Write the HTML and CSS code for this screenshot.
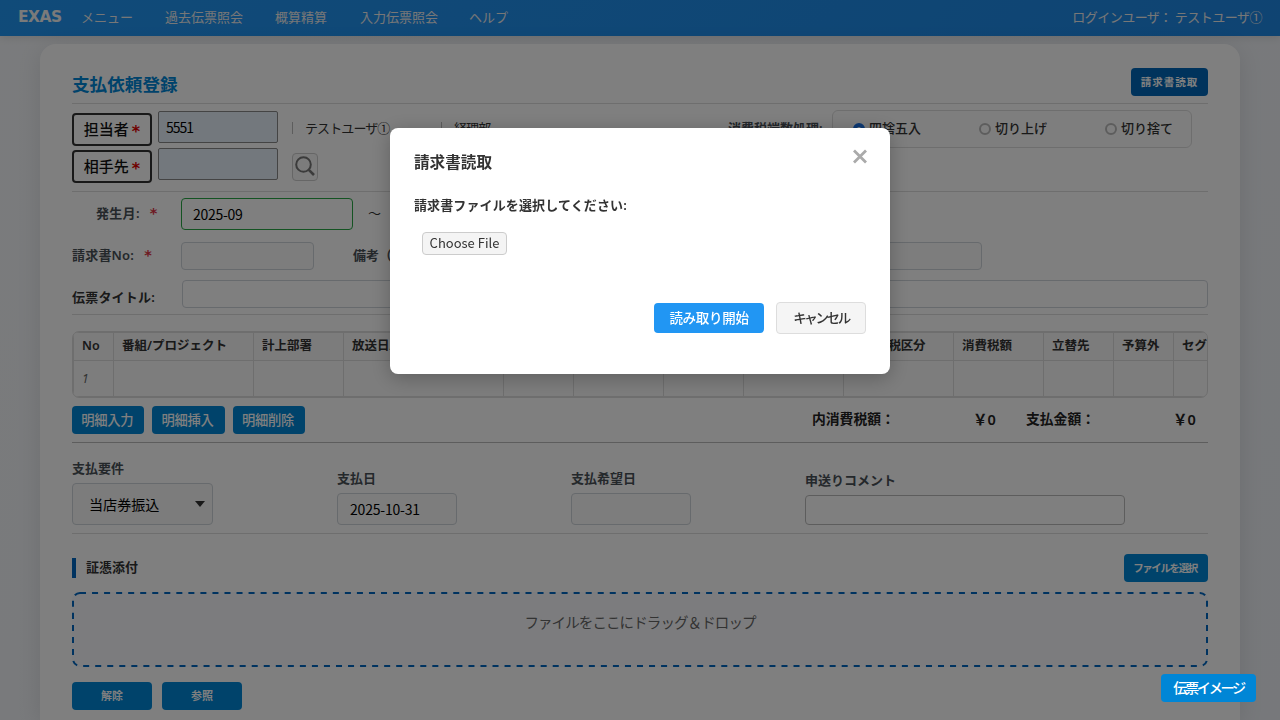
FILE: index.html
```html
<!DOCTYPE html>
<html lang="ja">
<head>
<meta charset="utf-8">
<title>支払依頼登録</title>
<link rel="stylesheet" href="styles.css">
</head>
<body>
<header class="navbar">
  <span class="brand">EXAS</span>
  <nav class="nav"><a class="n1">メニュー</a><a class="n2">過去伝票照会</a><a class="n3">概算精算</a><a class="n4">入力伝票照会</a><a>ヘルプ</a></nav>
  <span class="user">ログインユーザ： テストユーザ①</span>
</header>
<main class="card">
  <div class="title-row"><h1 class="title">支払依頼登録</h1><button class="btn btn-read">請求書読取</button></div>

  <section class="staff">
    <div class="staff-labels">
      <button class="label-btn">担当者<span class="req">*</span></button>
      <button class="label-btn">相手先<span class="req">*</span></button>
    </div>
    <div class="staff-inputs"><div class="input blue">5551</div><div class="input blue"></div></div>
    <div class="staff-info">
      <div class="info-line"><span class="user-name">テストユーザ①</span><span class="dept">経理部</span></div>
      <button class="search-btn"><svg width="22" height="22" viewBox="0 0 22 22"><circle cx="9.5" cy="9.5" r="7.3" fill="none" stroke="#777" stroke-width="2"/><path d="M14.8 14.8L20 20" stroke="#777" stroke-width="2.6"/></svg></button>
    </div>
    <div class="tax">
      <span class="tax-label">消費税端数処理:</span>
      <div class="radios">
        <label class="radio-item"><i class="radio checked"></i>四捨五入</label>
        <label class="radio-item"><i class="radio"></i>切り上げ</label>
        <label class="radio-item"><i class="radio"></i>切り捨て</label>
      </div>
    </div>
  </section>

  <section class="details">
    <div class="row row-month"><span class="lbl lbl-month">発生月:<b class="star">*</b></span><div class="input month">2025-09</div><span class="tilde">～</span></div>
    <div class="row row-no"><span class="lbl lbl-no">請求書No:<b class="star">*</b></span><div class="input invoice"></div><span class="lbl lbl-note">備考（支払）:</span><div class="input note"></div></div>
    <div class="row row-title"><span class="lbl lbl-title">伝票タイトル:</span><div class="input slip"></div></div>
  </section>

  <div class="table-wrap">
    <table class="grid">
      <colgroup><col class="w40"><col class="w140"><col class="w90"><col class="w160"><col class="w70"><col class="w90"><col class="w80"><col class="w100"><col class="w110"><col class="w90"><col class="w70"><col class="w60"><col class="w80"></colgroup>
      <tr><th>No</th><th>番組/プロジェクト</th><th>計上部署</th><th>放送日/対象月</th><th>科目</th><th>摘要</th><th>数量</th><th>金額</th><th class="th-tax">内消費税区分</th><th>消費税額</th><th>立替先</th><th>予算外</th><th>セグ</th></tr>
      <tr><td>1</td><td></td><td></td><td></td><td></td><td></td><td></td><td></td><td></td><td></td><td></td><td></td><td></td></tr>
    </table>
  </div>

  <div class="actions">
    <button class="btn btn-line">明細入力</button><button class="btn btn-line">明細挿入</button><button class="btn btn-line">明細削除</button>
    <div class="totals"><span class="t-tax">内消費税額：</span><span class="t-v1">￥0</span><span class="t-pay">支払金額：</span><span class="t-v2">￥0</span></div>
  </div>

  <section class="payment">
    <div class="field f1"><span class="flabel">支払要件</span><div class="input select">当店券振込<i class="caret"></i></div></div>
    <div class="field f2"><span class="flabel">支払日</span><div class="input date">2025-10-31</div></div>
    <div class="field f3"><span class="flabel">支払希望日</span><div class="input date"></div></div>
    <div class="field f4"><span class="flabel">申送りコメント</span><div class="input comment"></div></div>
  </section>

  <div class="attach-head"><h2 class="attach-title">証憑添付</h2><button class="btn btn-file">ファイルを選択</button></div>
  <div class="drop"><svg class="drop-line" width="1136" height="75"><rect x="1" y="1" width="1134" height="73" rx="7" fill="none" stroke="#0067c0" stroke-width="2" stroke-dasharray="6.02 6.02"/></svg>ファイルをここにドラッグ＆ドロップ</div>
  <div class="attach-actions"><button class="btn btn-small">解除</button><button class="btn btn-small">参照</button></div>
</main>

<div class="overlay">
  <div class="modal">
    <div class="modal-head"><h3 class="modal-title">請求書読取</h3><svg class="close" width="16" height="16" viewBox="0 0 16 16"><path d="M2 1.5L14 13.5M14 1.5L2 13.5" stroke="#aaa" stroke-width="2.8"/></svg></div>
    <p class="modal-text">請求書ファイルを選択してください:</p>
    <button class="choose">Choose File</button>
    <div class="modal-actions"><button class="btn start">読み取り開始</button><button class="btn cancel">キャンセル</button></div>
  </div>
</div>
<button class="btn floating">伝票イメージ</button>
</body>
</html>
```
FILE: styles.css
```css
* { box-sizing: border-box; }
html, body { height: 720px; overflow: hidden; }
body { margin: 0; background: linear-gradient(135deg, #f5f7fa 0%, #eef1f6 100%); font-family: "Noto Sans", "Noto Sans CJK JP", sans-serif; font-size: 13px; line-height: 20px; color: #333; }
h1, h2, h3, p { margin: 0; }
button { font-family: "Noto Sans CJK JP", sans-serif; padding: 0 0 2px; white-space: nowrap; }

.navbar { height: 36px; display: flex; align-items: center; padding: 0 18px 2px; background: linear-gradient(135deg, #2196f3, #1e88e5); box-shadow: 0 2px 8px rgba(0,0,0,.1); color: #fff; white-space: nowrap; }
.brand { width: 63px; font: bold 15.5px/20px "DejaVu Sans", sans-serif; letter-spacing: -.5px; color: #f5f5f5; }
.nav { display: flex; color: #eee; }
.n1 { width: 84px; }
.n2 { width: 110px; }
.n3 { width: 85px; }
.n4 { width: 109px; }
.user { margin-left: auto; color: #eee; letter-spacing: -.5px; }

.card { margin: 8px 40px 0; height: 676px; padding: 24px 32px 0; background: #fff; border-radius: 16px 16px 0 0; box-shadow: 0 4px 24px rgba(0,0,0,.1); }
.title-row { height: 36px; display: flex; justify-content: space-between; border-bottom: 1px solid #ddd; }
.title { font-size: 17.6px; line-height: 32px; color: #0086d6; }
.btn { height: 28px; border: 0; border-radius: 4px; background: #0086d6; color: #fff; font-weight: bold; }
.btn-read { width: 77px; background: #0067b8; font-size: 10.5px; letter-spacing: 1px; }

.staff { height: 88px; display: flex; border-bottom: 1px solid #ddd; }
.staff-labels { display: flex; flex-direction: column; gap: 4px; padding-top: 9px; width: 86px; }
.label-btn { width: 80px; height: 33px; border: 2px solid #333; border-radius: 4px; background: #fff; font-size: 15px; font-weight: 500; color: #111; }
.req { color: #e00000; margin-left: 3px; font: bold 16px/10px "DejaVu Sans", sans-serif; position: relative; top: 2px; }
.input { border: 1px solid #ced4da; border-radius: 4px; background: #fff; color: #000; font-family: "Noto Sans CJK JP", sans-serif; font-weight: 300; display: flex; align-items: center; }
.staff-inputs { display: flex; flex-direction: column; gap: 5px; padding-top: 7px; width: 134px; }
.blue { width: 120px; height: 32px; background: #e6f1fa; border-color: #888; border-radius: 2px; padding: 0 0 1px 7px; font-size: 14px; font-weight: 400; letter-spacing: -1px; }
.staff-info { width: 436px; padding-top: 14px; }
.info-line { display: flex; height: 20px; align-items: center; }
.user-name, .dept { border-left: 1px solid #bbb; padding-left: 12px; line-height: 12px; height: 12px; }
.user-name { width: 149px; letter-spacing: -.9px; }
.dept { letter-spacing: -.9px; }
.search-btn { display: flex; align-items: center; justify-content: center; margin-top: 15px; width: 26px; height: 28px; border: 1px solid #ccc; border-radius: 4px; background: #f8f8f8; }
.tax { display: flex; padding-top: 6px; font-weight: 600; }
.tax-label { width: 104px; padding-top: 8px; white-space: nowrap; color: #495057; }
.radios { display: flex; width: 360px; height: 38px; border: 1px solid #ddd; border-radius: 6px; padding: 0 0 2px 20px; align-items: center; background: #fdfdfd; font-size: 13px; font-weight: 500; }
.radio-item { display: flex; align-items: center; gap: 4px; flex: 0 0 126px; }
.radio { width: 12px; height: 12px; border: 2px solid #bbb; border-radius: 50%; margin-top: 2px; }
.checked { border: 4px solid #1a73e8; background: #fff; }

.details { height: 123px; border-bottom: 1px solid #ddd; }
.row { display: flex; align-items: flex-start; }
.row-month { padding-top: 6px; }
.lbl { font-weight: 600; color: #495057; white-space: nowrap; }
.lbl-month { width: 109px; padding: 5px 0 0 24px; letter-spacing: .3px; }
.star { color: #dc3545; margin-left: 10px; font: bold 14.5px/12px "DejaVu Sans", sans-serif; }
.month { width: 172px; height: 32px; border-color: #28a745; padding-left: 11px; font-size: 14px; font-weight: 400; letter-spacing: -.3px; }
.tilde { margin: 5px 0 0 15px; }
.row-no { padding-top: 12px; }
.lbl-no { width: 109px; padding-top: 3px; letter-spacing: .2px; }
.invoice { width: 133px; height: 28px; background: #fafafa; }
.lbl-note { width: 149px; padding: 3px 0 0 39px; }
.note { width: 519px; height: 28px; background: #fafafa; }
.row-title { padding-top: 10px; }
.lbl-title { width: 110px; padding-top: 7px; color: #333; letter-spacing: .2px; }
.slip { width: 1026px; height: 28px; background: #fff; }

.table-wrap { margin-top: 16px; height: 67px; border: 1px solid #ddd; border-radius: 7px; overflow: hidden; background: #fafafa; }
.grid { table-layout: fixed; width: 1180px; border-collapse: collapse; border: 1px solid #ddd; white-space: nowrap; }
.grid th, .grid td { border: 1px solid #ddd; padding: 0 8px; text-align: left; overflow: hidden; }
.grid th { height: 28px; font-size: 12.5px; line-height: 18px; padding-bottom: 2px; font-weight: 600; background: #f8f8f8; }
.grid .th-tax { letter-spacing: -.3px; }
.grid td { height: 36px; font-style: italic; font-size: 12px; color: #666; }
.w40 { width: 40px; } .w60 { width: 60px; } .w70 { width: 70px; } .w80 { width: 80px; } .w90 { width: 90px; } .w100 { width: 100px; } .w110 { width: 110px; } .w140 { width: 140px; } .w160 { width: 160px; }

.actions { display: flex; gap: 8px; padding-top: 8px; height: 45px; border-bottom: 1px solid #bbb; }
.btn-line { width: 72.4px; font-size: 13.3px; font-weight: 500; letter-spacing: -.3px; padding-right: 2px; }
.totals { margin-left: auto; display: flex; width: 396px; padding-top: 3px; font-size: 13.8px; font-weight: 600; color: #222; white-space: nowrap; }
.t-tax { width: 161px; }
.t-v1 { width: 53px; }
.t-pay { width: 147px; }
.t-v1, .t-v2 { font-size: 14.5px; }

.payment { height: 91px; display: flex; align-items: flex-end; padding-bottom: 8px; border-bottom: 1px solid #ddd; }
.field { display: flex; flex-direction: column; gap: 5px; }
.flabel { font-weight: 600; color: #495057; }
.f1 { width: 265px; }
.f2, .f3 { width: 234px; }
.select { width: 141px; height: 42px; padding: 0 7px 1px 16px; justify-content: space-between; font-size: 14.1px; font-weight: 400; background: #f8f8f8; }
.caret { border: 5px solid transparent; border-top: 6px solid #333; border-bottom: 0; }
.date { width: 120px; height: 32px; padding-left: 12px; font-size: 14px; font-weight: 400; letter-spacing: -.2px; background: #fafafa; }
.comment { width: 320px; height: 30px; border-color: #bbb; }

.attach-head { display: flex; justify-content: space-between; align-items: center; margin-top: 20px; height: 28px; }
.attach-title { border-left: 4px solid #0067c0; padding: 0 0 2px 10px; font-size: 13px; line-height: 18px; font-weight: 600; }
.btn-file { width: 84px; font-size: 10.5px; letter-spacing: -1.4px; padding-right: 2px; }
.drop { position: relative; margin-top: 10px; height: 75px; border-radius: 8px; background: #f8f9fc; text-align: center; font-size: 14.5px; line-height: 60px; letter-spacing: -.9px; color: #666; }
.drop-line { position: absolute; inset: 0; }
.attach-actions { display: flex; gap: 10px; margin-top: 15px; }
.btn-small { width: 80px; font-size: 11px; }

.overlay { position: fixed; inset: 0; background: rgba(0,0,0,.5); display: flex; align-items: flex-start; justify-content: center; padding-top: 128px; }
.modal { width: 500px; height: 246px; padding: 20px 24px; background: #fff; border-radius: 8px; box-shadow: 0 4px 20px rgba(0,0,0,.25); display: flex; flex-direction: column; }
.modal-head { display: flex; justify-content: space-between; }
.modal-title { font-size: 15.6px; line-height: 28px; font-weight: 600; }
.close { margin: 1px -2px 0 0; }
.modal-text { margin-top: 19px; font-weight: 600; letter-spacing: .12px; }
.choose { margin: 17px 0 0 8px; width: 85px; height: 23px; border: 1px solid #ccc; border-radius: 4px; background: #f4f4f4; color: #333; font: 400 13px/20px "Noto Sans CJK JP", sans-serif; letter-spacing: 0; padding: 0 0 1px; }
.modal-actions { margin-top: 47px; display: flex; justify-content: flex-end; align-items: center; gap: 12px; }
.start { width: 110px; height: 30px; background: #2196f3; font-size: 13.5px; font-weight: 500; letter-spacing: -.3px; }
.cancel { width: 90px; height: 32px; background: #f5f5f5; border: 1px solid #ddd; color: #333; font-size: 13.5px; font-weight: 500; letter-spacing: -2.4px; }
.floating { position: fixed; right: 24px; bottom: 18px; width: 95px; font-size: 14.2px; font-weight: 500; letter-spacing: -2.4px; }
```
